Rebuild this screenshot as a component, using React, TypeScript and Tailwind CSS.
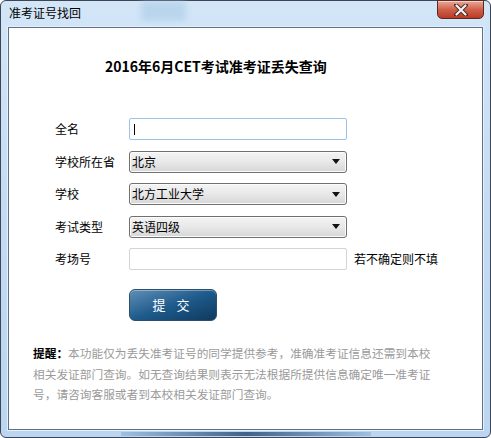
import React from "react";

const font = { fontFamily: '"Noto Sans CJK SC", "Noto Sans", sans-serif' };

const Select = ({ value }: { value: string }) => (
  <div className="h-[22px] w-[218px] flex items-center justify-between rounded-[3px] border border-[#707070] bg-gradient-to-b from-[#f4f4f4] via-[#e8e8e8] to-[#d6d6d6] pl-[2px] pr-[6px] text-[12px] text-black shadow-[inset_0_0_0_1px_#fcfcfc]">
    <span>{value}</span>
    <svg width="8" height="5" viewBox="0 0 8 5">
      <path d="M0 0 H8 L4 5 Z" fill="#111" />
    </svg>
  </div>
);

const App = () => {
  const rows = [
    { label: "全名", kind: "focus" },
    { label: "学校所在省", kind: "select", value: "北京" },
    { label: "学校", kind: "select", value: "北方工业大学" },
    { label: "考试类型", kind: "select", value: "英语四级" },
    { label: "考场号", kind: "input" },
  ];

  return (
    <div style={font} className="w-[491px] h-[438px] overflow-hidden">
      {/* window frame */}
      <div className="relative w-full h-full rounded-[6px] border border-[#3c4654] bg-gradient-to-b from-[#d3e6f8] via-[#c3dbf3] to-[#bcd6f1] flex flex-col">
        {/* blurred aero patches */}
        <div className="absolute left-[140px] top-0 w-[45px] h-[20px] bg-[#a9cbe6] opacity-60 blur-[3px]" />
        <div className="absolute left-[120px] bottom-[1px] w-[250px] h-[4px] bg-gradient-to-r from-[#9ec0e2] via-[#40628a] to-[#9ec0e2]" />

        {/* title bar */}
        <div className="h-[26px] flex items-start justify-between pl-[8px] pr-[6px]">
          <span className="mt-[4px] text-[12px] leading-[16px] text-black">准考证号找回</span>
          <div className="-mt-px w-[47px] h-[19px] rounded-b-[5px] border border-[#5a2a24] bg-gradient-to-b from-[#e9a898] via-[#d0604a] to-[#b83a25] flex items-center justify-center shadow-[inset_0_1px_0_rgba(255,255,255,0.5)]">
            <svg width="14" height="12" viewBox="0 0 14 12">
              <path d="M2 1 L12 11 M12 1 L2 11" stroke="#4a2a26" strokeWidth="4" strokeLinecap="round" />
              <path d="M2.5 1.5 L11.5 10.5 M11.5 1.5 L2.5 10.5" stroke="#f2f2f2" strokeWidth="2.2" strokeLinecap="round" />
            </svg>
          </div>
        </div>

        {/* content panel */}
        <div className="mx-[7px] mb-[7px] flex-1 border border-[#5f7186] bg-white outline outline-1 outline-[#e6f0fa]">
          <h1 className="mt-[28px] pl-[96px] text-[14px] leading-[20px] font-bold text-black">
            2016年6月CET考试准考证丢失查询
          </h1>

          <div className="mt-[42px] pl-[46px] grid grid-cols-[74px_218px_auto] gap-y-[10.5px] items-center text-[12px] text-black">
            {rows.map((row, i) => (
              <React.Fragment key={i}>
                <span className="leading-[22px]">{row.label}</span>
                {row.kind === "select" ? (
                  <Select value={row.value as string} />
                ) : row.kind === "focus" ? (
                  <div className="h-[22px] w-[218px] rounded-[2px] border border-[#9cc3e6] bg-white flex items-center pl-[4px]">
                    <span className="w-px h-[11px] bg-black" />
                  </div>
                ) : (
                  <div className="h-[22px] w-[218px] rounded-[2px] border border-[#d4d4d4] bg-white" />
                )}
                <span className="pl-[7px]">{row.kind === "input" ? "若不确定则不填" : ""}</span>
              </React.Fragment>
            ))}
          </div>

          <div className="mt-[19px] pl-[120px]">
            <button className="w-[88px] h-[32px] rounded-[6px] border border-[#2d4f6e] bg-gradient-to-br from-[#5f8fb6] via-[#1e5b8c] to-[#0f3a5e] text-white text-[13px] tracking-[4px] shadow-[inset_0_1px_0_rgba(255,255,255,0.35)]">
              提 交
            </button>
          </div>

          <p className="mt-[22px] ml-[24px] w-[402px] text-[11.7px] leading-[20.5px] text-[#9a9a9a]">
            <b className="font-bold text-black">提醒：</b><span>本功能仅为丢失准考证号的同学提供参考，准确准考证信息还需到本校相关发证部门查询。如无查询结果则表示无法根据所提供信息确定唯一准考证号，请咨询客服或者到本校相关发证部门查询。</span>
          </p>
        </div>
      </div>
    </div>
  );
};

export default App;
